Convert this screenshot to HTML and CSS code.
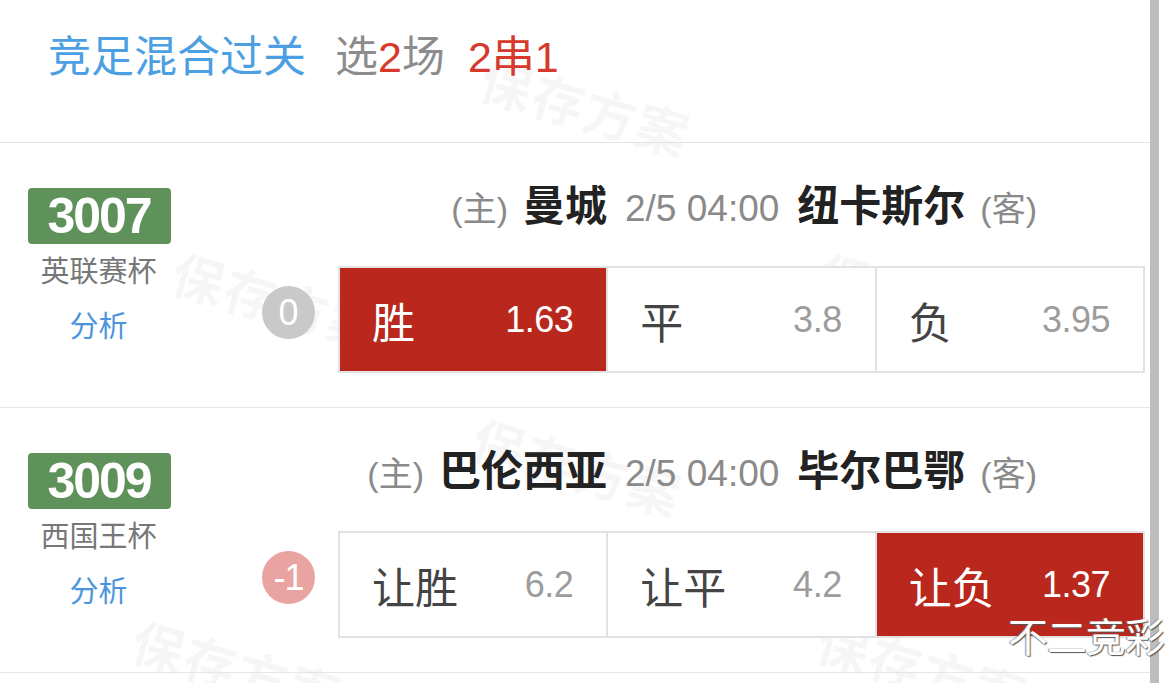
FILE: index.html
```html
<!DOCTYPE html>
<html lang="zh">
<head>
<meta charset="utf-8">
<link rel="stylesheet" href="styles.css">
</head>
<body>
<div class="page">
  <main class="main">
    <div class="wm wm1">保存方案</div>
    <div class="wm wm2">保存方案</div>
    <div class="wm wm3">保存方案</div>
    <div class="wm wm4">保存方案</div>
    <div class="wm wm5">保存方案</div>
    <div class="wm wm6">保存方案</div>

    <header class="top">
      <span class="title">竞足混合过关</span>
      <span class="pick">选<em>2</em>场</span>
      <span class="combo">2串1</span>
    </header>

    <section class="match">
      <div class="left">
        <div class="badge">3007</div>
        <div class="league">英联赛杯</div>
        <div class="analysis">分析</div>
      </div>
      <div class="right">
        <div class="teams">
          <span class="side">(主)</span>
          <span class="team">曼城</span>
          <span class="time">2/5 04:00</span>
          <span class="team">纽卡斯尔</span>
          <span class="side">(客)</span>
        </div>
        <div class="bet">
          <div class="hcp hcp-zero">0</div>
          <div class="odds">
            <div class="cell on"><span class="lab">胜</span><span class="num">1.63</span></div>
            <div class="cell"><span class="lab">平</span><span class="num">3.8</span></div>
            <div class="cell"><span class="lab">负</span><span class="num">3.95</span></div>
          </div>
        </div>
      </div>
    </section>

    <section class="match">
      <div class="left">
        <div class="badge">3009</div>
        <div class="league">西国王杯</div>
        <div class="analysis">分析</div>
      </div>
      <div class="right">
        <div class="teams">
          <span class="side">(主)</span>
          <span class="team">巴伦西亚</span>
          <span class="time">2/5 04:00</span>
          <span class="team">毕尔巴鄂</span>
          <span class="side">(客)</span>
        </div>
        <div class="bet">
          <div class="hcp hcp-neg">-1</div>
          <div class="odds">
            <div class="cell"><span class="lab">让胜</span><span class="num">6.2</span></div>
            <div class="cell"><span class="lab">让平</span><span class="num">4.2</span></div>
            <div class="cell on"><span class="lab">让负</span><span class="num">1.37</span></div>
          </div>
        </div>
      </div>
    </section>
  </main>
  <div class="scrollbar"></div>
  <div class="gutter"></div>
  <div class="brand">不二竞彩</div>
</div>
</body>
</html>
```

FILE: styles.css
```css
* { box-sizing: border-box; margin: 0; padding: 0; }
html, body { width: 1170px; height: 683px; overflow: hidden; background: #fff; }
body {
  font-family: "Liberation Sans", "Noto Sans CJK SC", sans-serif;
  color: #333;
}
.page {
  position: relative;
  display: flex;
  width: 1170px;
  height: 683px;
}
.main {
  position: relative;
  width: 1150px;
  height: 683px;
  overflow: hidden;
}
.scrollbar {
  width: 9px;
  background: #bdbdbd;
}
.gutter {
  flex: 1;
  background: #fff;
}

/* top bar */
.top {
  position: relative;
  height: 143px;
  border-bottom: 1px solid #e3e3e3;
  padding: 33px 0 0 48px;
  display: flex;
  align-items: baseline;
  line-height: 48px;
}
.title {
  font-size: 43px;
  color: #4c9fe2;
  margin-right: 29px;
}
.pick {
  font-size: 43px;
  color: #8c8c8c;
  margin-right: 23px;
}
.pick em { font-style: normal; color: #d63a2c; }
.combo {
  font-size: 43px;
  color: #d63a2c;
}

/* match rows */
.match {
  position: relative;
  display: flex;
  border-bottom: 1px solid #e6e6e6;
}
.left {
  width: 197px;
  padding-top: 45px;
  display: flex;
  flex-direction: column;
  align-items: center;
}
.badge {
  width: 143px;
  height: 56px;
  margin-left: 1px;
  background: #5f915a;
  border-radius: 4px;
  color: #fff;
  font-weight: bold;
  font-size: 50px;
  letter-spacing: -2px;
  line-height: 56px;
  text-align: center;
}
.league {
  font-size: 29px;
  line-height: 56px;
  color: #777;
}
.analysis {
  font-size: 29px;
  line-height: 54px;
  color: #4a95dc;
}
.right {
  flex: 1;
  padding: 41px 5px 34px 0;
}
.teams {
  height: 46px;
  display: flex;
  justify-content: flex-end;
  align-items: baseline;
  gap: 15px;
  padding-right: 108px;
  line-height: 46px;
  white-space: nowrap;
}
.side {
  font-size: 34px;
  color: #8a8a8a;
}
.team {
  font-size: 42px;
  font-weight: bold;
  color: #222;
}
.time {
  font-size: 37px;
  color: #8a8a8a;
  margin: 0 3px;
}
.bet {
  margin-top: 36px;
  display: flex;
  align-items: center;
  justify-content: flex-end;
}
.hcp {
  width: 53px;
  height: 53px;
  border-radius: 50%;
  color: #fff;
  font-size: 36px;
  line-height: 53px;
  text-align: center;
  margin: 0 23px 14px 0;
}
.hcp-zero { background: #c9c9c9; }
.hcp-neg { background: #e9a3a1; letter-spacing: -1px; }
.odds {
  width: 807px;
  height: 107px;
  display: grid;
  grid-template-columns: repeat(3, 1fr);
  gap: 2px;
  padding: 2px;
  background: #e2e2e2;
}
.cell {
  background: #fff;
  display: flex;
  align-items: center;
  justify-content: space-between;
  padding: 0 33px 0 32px;
}
.lab {
  font-size: 43px;
  color: #444;
}
.num {
  font-size: 36px;
  color: #9c9c9c;
  letter-spacing: -0.5px;
}
.cell.on { background: #b9271d; }
.cell.on .lab, .cell.on .num { color: #fff; }

/* watermark layer, under the rows */
.wm {
  position: absolute;
  z-index: 0;
  font-size: 52px;
  font-weight: bold;
  color: rgba(0, 0, 0, 0.035);
  transform: rotate(16deg);
  white-space: nowrap;
  pointer-events: none;
  letter-spacing: 2px;
}
.wm1 { left: 478px; top: 68px; }
.wm2 { left: 170px; top: 262px; }
.wm3 { left: 815px; top: 262px; }
.wm4 { left: 470px; top: 428px; }
.wm5 { left: 130px; top: 630px; }
.wm6 { left: 815px; top: 630px; }

.brand {
  position: absolute;
  right: 6px;
  bottom: 26px;
  font-family: "Noto Sans CJK SC", sans-serif;
  font-size: 40px;
  line-height: 44px;
  color: #fff;
  letter-spacing: -1px;
  text-shadow: 1px 1px 1px #555, -1px 0 1px #888;
}
```
